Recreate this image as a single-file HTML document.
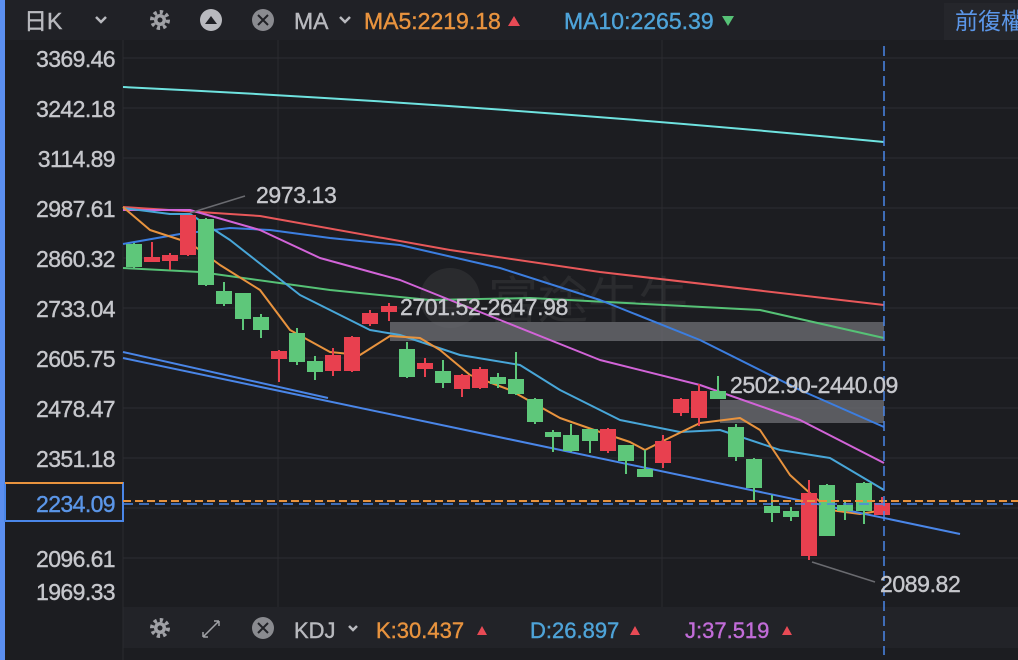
<!DOCTYPE html>
<html><head><meta charset="utf-8"><style>
body{margin:0;width:1018px;height:660px;overflow:hidden;background:#1c1d21;font-family:"Liberation Sans","Noto Sans CJK TC",sans-serif}
svg{position:absolute;left:0;top:0}
</style></head><body>
<svg width="1018" height="660" viewBox="0 0 1018 660" font-family="Liberation Sans, Noto Sans CJK TC, sans-serif">
<rect x="0" y="0" width="1018" height="660" fill="#1c1d21"/>
<rect x="0" y="0" width="1018" height="40" fill="#202126"/>
<rect x="944" y="3" width="74" height="37" fill="#25262b"/>
<rect x="123" y="607" width="895" height="41" fill="#222328"/>
<rect x="0" y="0" width="5" height="660" fill="#5b8ff0"/>
<line x1="123" y1="40" x2="123" y2="660" stroke="#2a2b30"/>
<line x1="278" y1="40" x2="278" y2="607" stroke="#2a2b30"/>
<line x1="662" y1="40" x2="662" y2="607" stroke="#2a2b30"/>
<g stroke="#2c2d32" stroke-width="1">
<line x1="123" y1="58" x2="1018" y2="58"/><line x1="123" y1="108" x2="1018" y2="108"/><line x1="123" y1="158" x2="1018" y2="158"/><line x1="123" y1="208" x2="1018" y2="208"/><line x1="123" y1="258" x2="1018" y2="258"/><line x1="123" y1="308" x2="1018" y2="308"/><line x1="123" y1="358" x2="1018" y2="358"/><line x1="123" y1="408" x2="1018" y2="408"/><line x1="123" y1="458" x2="1018" y2="458"/><line x1="123" y1="508" x2="1018" y2="508"/><line x1="123" y1="558" x2="1018" y2="558"/>
</g>
<!-- watermark -->
<g opacity="0.06" fill="#ffffff"><circle cx="450" cy="298" r="30"/><text x="488" y="318" font-size="50">富途牛牛</text></g>
<!-- toolbar -->
<g font-size="23" fill="#b8b9be" stroke-width="0.4">
<text x="24" y="29" stroke="#b8b9be">日K</text>
<path d="M96 17 l5 5 l5 -5" stroke="#b8b9be" stroke-width="2.5" fill="none"/>
<circle cx="160" cy="20" r="8" fill="none" stroke="#a0a1a6" stroke-width="4" stroke-dasharray="3.2 3"/>
<circle cx="160" cy="20" r="6" fill="#a0a1a6"/><circle cx="160" cy="20" r="2.5" fill="#202126"/>
<circle cx="211" cy="20" r="11" fill="#b8b9be"/><path d="M205 24 L211 16 L217 24Z" fill="#202126"/>
<circle cx="263" cy="20" r="11" fill="#8a8b90"/><path d="M258 15 L268 25 M268 15 L258 25" stroke="#202126" stroke-width="2"/>
<text x="294" y="29" stroke="#b8b9be">MA</text>
<path d="M340 17 l5 5 l5 -5" stroke="#b8b9be" stroke-width="2.5" fill="none"/>
<text x="364" y="29" fill="#e8933e" stroke="#e8933e">MA5:2219.18</text>
<path d="M508 26 L514 16 L520 26Z" fill="#e84a55"/>
<text x="564" y="29" fill="#4ea3d8" stroke="#4ea3d8">MA10:2265.39</text>
<path d="M722 16 L734 16 L728 26Z" fill="#56c276"/>
<text x="955" y="29" fill="#5b96e8">前復權</text>
</g>
<!-- axis labels -->
<g font-size="23" fill="#c6c7cc" text-anchor="end" letter-spacing="-0.6" stroke="#c6c7cc" stroke-width="0.4">
<text x="115" y="67">3369.46</text><text x="115" y="117">3242.18</text><text x="115" y="167">3114.89</text><text x="115" y="217">2987.61</text><text x="115" y="267">2860.32</text><text x="115" y="317">2733.04</text><text x="115" y="367">2605.75</text><text x="115" y="417">2478.47</text><text x="115" y="467">2351.18</text><text x="115" y="567">2096.61</text><text x="115" y="600">1969.33</text>
</g>
<rect x="5" y="483" width="118" height="38" fill="#1c1d21" stroke="#4a86e8" stroke-width="2"/>
<line x1="5" y1="483" x2="123" y2="483" stroke="#e8933e" stroke-width="2"/>
<text x="115" y="512" font-size="23" fill="#5b96e8" stroke="#5b96e8" stroke-width="0.4" text-anchor="end" letter-spacing="-0.6">2234.09</text>
<!-- gaps -->
<rect x="390" y="322" width="494" height="19" fill="#6a6b70" opacity="0.8"/>
<rect x="720" y="400" width="164" height="23" fill="#6a6b70" opacity="0.8"/>
<!-- lines -->
<g fill="none" stroke-width="2" stroke-linejoin="round">
<path d="M123 87 Q500 105 884 142" stroke="#6fe3e0"/>
<path d="M123 207 L260 216 L450 250 L600 272 L884 305" stroke="#e8585a"/>
<path d="M123 268 L200 272 L330 290 L430 300 L530 298 L760 310 L884 338" stroke="#56c276"/>
<path d="M123 244 L180 234 L230 228 L270 230 L330 238 L400 245 L500 268 L600 300 L700 340 L800 390 L884 427" stroke="#3c7ee0"/>
<path d="M123 210 L190 210 L260 230 L320 258 L400 280 L500 320 L600 360 L700 385 L800 420 L884 463" stroke="#d264d8"/>
<path d="M123 208 L170 214 L190 214 L230 240 L300 295 L370 330 L400 335 L460 355 L520 365 L560 390 L620 420 L680 432 L720 430 L780 450 L830 458 L884 490" stroke="#48a6d8"/>
<path d="M123 207 L150 230 L190 243 L220 265 L260 290 L290 330 L330 352 L360 355 L390 336 L420 338 L440 350 L470 375 L510 390 L560 418 L600 432 L630 442 L645 450 L665 440 L700 423 L740 418 L760 430 L790 475 L812 495 L830 510 L860 514 L884 510" stroke="#e8933e"/>
<path d="M123 352 L328 398" stroke="#4a86e8"/>
<path d="M123 358 L960 534" stroke="#4a86e8"/>
</g>
<!-- candles -->
<g stroke-width="2">
<g stroke="#5ec77a" fill="#5ec77a">
<line x1="134" y1="243" x2="134" y2="268"/><rect x="127" y="245" width="14" height="21"/>
<line x1="206" y1="218" x2="206" y2="286"/><rect x="199" y="220" width="14" height="64"/>
<line x1="224" y1="282" x2="224" y2="306"/><rect x="217" y="292" width="14" height="11"/>
<line x1="243" y1="294" x2="243" y2="330"/><rect x="236" y="294" width="14" height="24"/>
<line x1="261" y1="314" x2="261" y2="338"/><rect x="254" y="318" width="14" height="11"/>
<line x1="297" y1="328" x2="297" y2="365"/><rect x="290" y="334" width="14" height="27"/>
<line x1="315" y1="356" x2="315" y2="380"/><rect x="308" y="362" width="14" height="9"/>
<line x1="407" y1="342" x2="407" y2="378"/><rect x="400" y="350" width="14" height="26"/>
<line x1="443" y1="360" x2="443" y2="388"/><rect x="436" y="372" width="14" height="10"/>
<line x1="498" y1="373" x2="498" y2="388"/><rect x="491" y="378" width="14" height="5"/>
<line x1="516" y1="352" x2="516" y2="395"/><rect x="509" y="380" width="14" height="13"/>
<line x1="535" y1="398" x2="535" y2="424"/><rect x="528" y="400" width="14" height="21"/>
<line x1="553" y1="430" x2="553" y2="452"/><rect x="546" y="433" width="14" height="3"/>
<line x1="571" y1="424" x2="571" y2="452"/><rect x="564" y="436" width="14" height="14"/>
<line x1="590" y1="430" x2="590" y2="453"/><rect x="583" y="430" width="14" height="10"/>
<line x1="626" y1="446" x2="626" y2="474"/><rect x="619" y="446" width="14" height="14"/>
<line x1="645" y1="450" x2="645" y2="477"/><rect x="638" y="470" width="14" height="6"/>
<line x1="718" y1="376" x2="718" y2="398"/><rect x="711" y="392" width="14" height="6"/>
<line x1="736" y1="424" x2="736" y2="461"/><rect x="729" y="428" width="14" height="28"/>
<line x1="754" y1="458" x2="754" y2="500"/><rect x="747" y="460" width="14" height="27"/>
<line x1="772" y1="495" x2="772" y2="522"/><rect x="765" y="507" width="14" height="5"/>
<line x1="791" y1="507" x2="791" y2="521"/><rect x="784" y="512" width="14" height="4"/>
<line x1="827" y1="484" x2="827" y2="535"/><rect x="820" y="486" width="14" height="49"/>
<line x1="845" y1="500" x2="845" y2="520"/><rect x="838" y="506" width="14" height="4"/>
<line x1="864" y1="482" x2="864" y2="524"/><rect x="857" y="484" width="14" height="26"/>
</g>
<g stroke="#e8404f" fill="#e8404f">
<line x1="152" y1="242" x2="152" y2="262"/><rect x="145" y="258" width="14" height="3"/>
<line x1="170" y1="253" x2="170" y2="270"/><rect x="163" y="256" width="14" height="4"/>
<line x1="188" y1="216" x2="188" y2="256"/><rect x="181" y="216" width="14" height="38"/>
<line x1="279" y1="350" x2="279" y2="382"/><rect x="272" y="352" width="14" height="6"/>
<line x1="333" y1="348" x2="333" y2="376"/><rect x="326" y="356" width="14" height="14"/>
<line x1="352" y1="336" x2="352" y2="372"/><rect x="345" y="338" width="14" height="32"/>
<line x1="370" y1="310" x2="370" y2="326"/><rect x="363" y="314" width="14" height="9"/>
<line x1="389" y1="303" x2="389" y2="321"/><rect x="382" y="307" width="14" height="4"/>
<line x1="425" y1="358" x2="425" y2="377"/><rect x="418" y="364" width="14" height="4"/>
<line x1="462" y1="374" x2="462" y2="397"/><rect x="455" y="376" width="14" height="12"/>
<line x1="480" y1="367" x2="480" y2="389"/><rect x="473" y="370" width="14" height="17"/>
<line x1="608" y1="428" x2="608" y2="453"/><rect x="601" y="430" width="14" height="20"/>
<line x1="663" y1="435" x2="663" y2="468"/><rect x="656" y="442" width="14" height="20"/>
<line x1="681" y1="398" x2="681" y2="416"/><rect x="674" y="400" width="14" height="12"/>
<line x1="699" y1="384" x2="699" y2="426"/><rect x="692" y="392" width="14" height="25"/>
<line x1="809" y1="480" x2="809" y2="560"/><rect x="802" y="494" width="14" height="61"/>
<line x1="882" y1="497" x2="882" y2="514"/><rect x="875" y="504" width="14" height="10"/>
</g>
</g>
<!-- dashed -->
<line x1="123" y1="501" x2="1018" y2="501" stroke="#e8933e" stroke-width="2" stroke-dasharray="8 4"/>
<line x1="123" y1="504" x2="1018" y2="504" stroke="#4a86e8" stroke-width="1.5" stroke-dasharray="10 6"/>
<line x1="884" y1="46" x2="884" y2="655" stroke="#4a86e8" stroke-width="1.5" stroke-dasharray="10 5"/>
<!-- labels -->
<g stroke="#6a6b70" stroke-width="1.5"><line x1="190" y1="213" x2="245" y2="196"/><line x1="812" y1="562" x2="875" y2="582"/></g>
<g font-size="23" fill="#c6c7cc" letter-spacing="-0.4" stroke="#c6c7cc" stroke-width="0.4">
<text x="256" y="203">2973.13</text>
<text x="400" y="315">2701.52-2647.98</text>
<text x="730" y="393">2502.90-2440.09</text>
<text x="880" y="592">2089.82</text>
</g>
<!-- bottom toolbar -->
<g font-size="22" fill="#b8b9be" stroke-width="0.4">
<circle cx="160" cy="628" r="8" fill="none" stroke="#a0a1a6" stroke-width="4" stroke-dasharray="3.2 3"/>
<circle cx="160" cy="628" r="6" fill="#a0a1a6"/><circle cx="160" cy="628" r="2.5" fill="#222328"/>
<path d="M203 637 L219 621 M203 637 v-5 M203 637 h5 M219 621 v5 M219 621 h-5" stroke="#a0a1a6" stroke-width="1.5" fill="none"/>
<circle cx="263" cy="628" r="11" fill="#8a8b90"/><path d="M258 623 L268 633 M268 623 L258 633" stroke="#222328" stroke-width="2"/>
<text x="294" y="638" stroke="#b8b9be">KDJ</text>
<path d="M349 626 l4 4 l4 -4" stroke="#b8b9be" stroke-width="2.5" fill="none"/>
<text x="376" y="638" fill="#e8933e" stroke="#e8933e">K:30.437</text><path d="M477 635 L482 626 L487 635Z" fill="#e84a55"/>
<text x="530" y="638" fill="#4ea3d8" stroke="#4ea3d8">D:26.897</text><path d="M630 635 L635 626 L640 635Z" fill="#e84a55"/>
<text x="685" y="638" fill="#c16cd8" stroke="#c16cd8">J:37.519</text><path d="M782 635 L787 626 L792 635Z" fill="#e84a55"/>
</g>
</svg>
</body></html>
